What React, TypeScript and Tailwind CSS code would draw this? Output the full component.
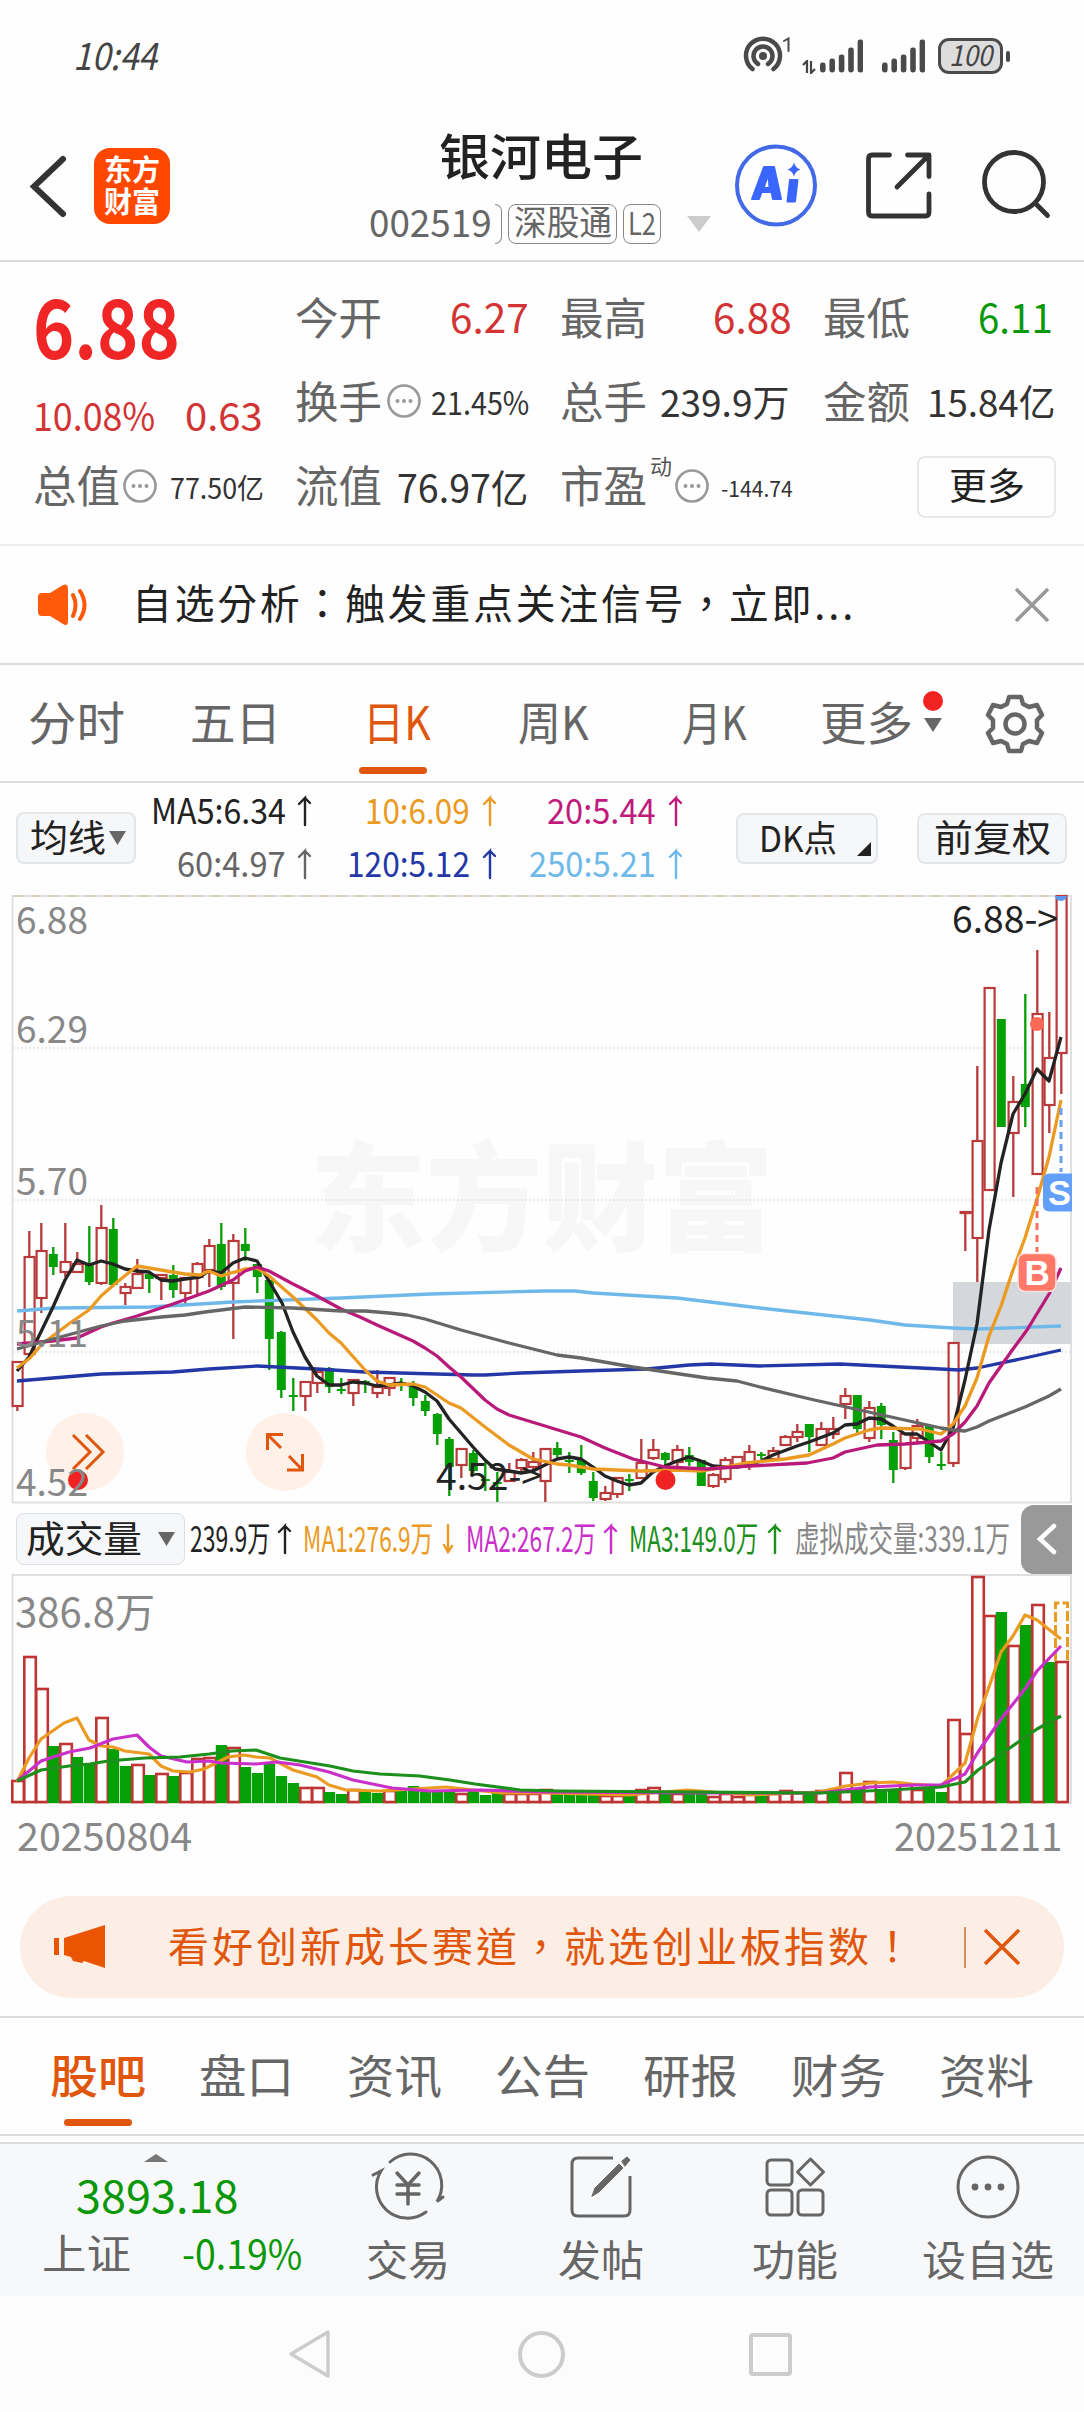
import React, { useLayoutEffect, useRef, useState } from 'react'
import clsx from 'clsx'

type Candle = [kind: 'r' | 'g', high: number, top: number, bottom: number, low: number]
type Volume = [kind: 'r' | 'g', top: number]

const UP = '#b93a3a'
const DOWN = '#05a005'

const candles: Candle[] = [
  ['r', 1362, 1362, 1406, 1411], ['r', 1231, 1257, 1354, 1355], ['r', 1223, 1251, 1298, 1313], ['g', 1247, 1254, 1267, 1275],
  ['r', 1223, 1262, 1272, 1277], ['r', 1252, 1264, 1272, 1272], ['g', 1226, 1264, 1282, 1285], ['r', 1205, 1228, 1283, 1285],
  ['g', 1218, 1229, 1285, 1285], ['r', 1283, 1287, 1293, 1305], ['r', 1259, 1274, 1288, 1288], ['g', 1272, 1274, 1279, 1293],
  ['r', 1274, 1275, 1278, 1300], ['g', 1265, 1275, 1290, 1298], ['r', 1277, 1278, 1293, 1304], ['r', 1262, 1264, 1277, 1294],
  ['r', 1239, 1246, 1270, 1287], ['g', 1223, 1244, 1287, 1290], ['r', 1234, 1241, 1283, 1339], ['g', 1228, 1244, 1251, 1261],
  ['g', 1264, 1264, 1277, 1293], ['g', 1280, 1280, 1339, 1370], ['g', 1331, 1332, 1390, 1398], ['g', 1378, 1395, 1397, 1411],
  ['r', 1382, 1382, 1396, 1411], ['r', 1368, 1372, 1383, 1393], ['g', 1367, 1368, 1387, 1393], ['g', 1378, 1389, 1391, 1394],
  ['r', 1379, 1380, 1393, 1406], ['g', 1380, 1381, 1383, 1393], ['r', 1370, 1387, 1393, 1398], ['r', 1377, 1378, 1388, 1396],
  ['g', 1378, 1382, 1384, 1391], ['g', 1381, 1387, 1398, 1406], ['g', 1395, 1401, 1411, 1416], ['g', 1413, 1414, 1434, 1445],
  ['g', 1437, 1439, 1467, 1496], ['r', 1449, 1449, 1465, 1478], ['g', 1450, 1453, 1471, 1475], ['g', 1462, 1479, 1480, 1491],
  ['g', 1472, 1482, 1483, 1502], ['r', 1463, 1472, 1481, 1482], ['r', 1458, 1460, 1468, 1472], ['r', 1452, 1462, 1467, 1471],
  ['r', 1449, 1449, 1481, 1502], ['g', 1442, 1448, 1455, 1457], ['g', 1452, 1460, 1461, 1473], ['g', 1445, 1460, 1473, 1475],
  ['g', 1472, 1481, 1498, 1501], ['r', 1486, 1493, 1499, 1501], ['r', 1477, 1478, 1494, 1498], ['g', 1474, 1479, 1481, 1491],
  ['r', 1439, 1463, 1478, 1479], ['r', 1439, 1450, 1458, 1460], ['g', 1452, 1453, 1460, 1465], ['r', 1445, 1450, 1462, 1466],
  ['g', 1447, 1455, 1462, 1466], ['g', 1460, 1460, 1486, 1486], ['r', 1473, 1475, 1486, 1488], ['r', 1457, 1460, 1479, 1483],
  ['r', 1457, 1457, 1466, 1467], ['r', 1445, 1452, 1464, 1470], ['g', 1452, 1454, 1456, 1459], ['r', 1447, 1451, 1459, 1459],
  ['r', 1435, 1437, 1445, 1445], ['r', 1424, 1432, 1437, 1442], ['g', 1424, 1424, 1437, 1452], ['r', 1422, 1429, 1445, 1445],
  ['r', 1417, 1429, 1434, 1439], ['r', 1388, 1396, 1404, 1419], ['g', 1395, 1395, 1429, 1435], ['r', 1401, 1408, 1438, 1442],
  ['g', 1403, 1406, 1425, 1439], ['g', 1432, 1440, 1470, 1483], ['r', 1434, 1434, 1468, 1470], ['r', 1419, 1426, 1438, 1442],
  ['g', 1426, 1426, 1457, 1463], ['g', 1452, 1464, 1466, 1470], ['r', 1343, 1343, 1463, 1467], ['r', 1212, 1212, 1213, 1251],
  ['r', 1066, 1141, 1238, 1282], ['r', 988, 988, 1190, 1190], ['g', 1019, 1019, 1127, 1127], ['r', 1076, 1102, 1133, 1197],
  ['g', 994, 1084, 1107, 1127], ['r', 950, 1014, 1174, 1174], ['r', 1012, 1058, 1105, 1133], ['r', 896, 896, 1053, 1094],
]

const volumes: Volume[] = [
  ['r', 1780], ['r', 1656], ['r', 1688], ['g', 1746], ['r', 1743], ['g', 1757], ['g', 1764], ['r', 1717], ['g', 1749], ['g', 1766],
  ['r', 1764], ['g', 1775], ['r', 1773], ['g', 1776], ['r', 1772], ['r', 1758], ['r', 1757], ['g', 1745], ['r', 1747], ['g', 1767],
  ['g', 1773], ['g', 1764], ['g', 1776], ['g', 1783], ['r', 1787], ['r', 1787], ['g', 1792], ['g', 1794], ['r', 1789], ['g', 1792],
  ['g', 1793], ['r', 1790], ['g', 1791], ['g', 1786], ['g', 1791], ['g', 1791], ['g', 1790], ['r', 1793], ['g', 1791], ['g', 1795],
  ['g', 1793], ['r', 1793], ['r', 1793], ['r', 1793], ['r', 1789], ['g', 1792], ['g', 1792], ['g', 1792], ['g', 1792], ['r', 1795],
  ['r', 1795], ['g', 1793], ['r', 1789], ['r', 1787], ['g', 1792], ['r', 1793], ['g', 1792], ['g', 1793], ['r', 1796], ['r', 1793],
  ['r', 1796], ['r', 1793], ['g', 1796], ['r', 1793], ['r', 1790], ['r', 1792], ['g', 1793], ['r', 1790], ['g', 1789], ['r', 1772],
  ['g', 1789], ['r', 1781], ['g', 1789], ['g', 1789], ['r', 1784], ['r', 1789], ['g', 1789], ['g', 1792], ['r', 1719], ['r', 1733],
  ['r', 1576], ['r', 1615], ['g', 1612], ['r', 1645], ['g', 1625], ['r', 1604], ['g', 1662], ['r', 1661],
]

const priceLines = [
  { color: '#6fb9ea', points: '17,1311 55,1308 150,1307 233,1302 341,1298 430,1294 545,1291 575,1291 593,1293 677,1298 710,1302 760,1308 870,1320 905,1325 953,1328 977,1329 1061,1326' },
  { color: '#2337a6', points: '17,1381 101,1374 173,1372 209,1369 257,1366 317,1369 365,1372 400,1373 473,1375 485,1375 521,1373 581,1371 647,1369 689,1365 711,1364 760,1366 840,1364 941,1369 959,1370 977,1368 1025,1358 1061,1350' },
  { color: '#232323', points: '17,1371 29,1357 37,1340 53,1307 65,1280 77,1260 89,1265 101,1261 113,1264 125,1269 137,1271 149,1272 161,1280 172,1281 185,1279 200,1277 209,1271 221,1273 233,1263 245,1258 257,1261 269,1281 282,1303 293,1332 305,1357 317,1376 329,1385 341,1385 353,1382 365,1383 377,1386 389,1385 401,1383 413,1386 425,1392 437,1401 449,1419 461,1433 473,1447 485,1460 495,1469 509,1471 521,1473 533,1471 545,1465 557,1459 569,1457 581,1459 593,1467 605,1476 617,1481 629,1485 641,1483 653,1472 665,1466 677,1461 689,1457 701,1461 713,1466 725,1467 737,1467 749,1465 761,1461 773,1455 797,1446 809,1442 833,1433 845,1425 857,1424 869,1418 881,1419 893,1426 905,1434 917,1434 929,1442 941,1450 953,1428 965,1380 977,1324 989,1230 1001,1163 1013,1114 1025,1094 1037,1069 1049,1081 1061,1037' },
  { color: '#eb9a22', points: '17,1368 30,1358 42,1344 70,1323 89,1310 101,1296 116,1283 137,1266 161,1270 185,1274 200,1275 209,1271 221,1276 245,1269 257,1268 269,1276 293,1297 317,1320 329,1333 341,1343 365,1370 377,1381 389,1385 413,1384 425,1387 449,1403 461,1408 485,1427 509,1445 533,1459 557,1464 569,1465 593,1469 617,1470 641,1471 677,1470 701,1471 725,1467 745,1463 785,1459 809,1455 833,1444 845,1438 869,1430 881,1428 920,1429 941,1434 953,1424 965,1406 977,1378 989,1336 1001,1306 1013,1270 1025,1238 1037,1199 1049,1157 1061,1100' },
  { color: '#b91a79', points: '17,1344 52,1341 77,1338 101,1327 113,1323 137,1316 173,1304 209,1291 233,1280 245,1271 257,1267 269,1271 293,1284 317,1296 341,1309 360,1317 377,1325 413,1341 425,1348 437,1356 449,1367 461,1377 485,1400 497,1409 509,1415 545,1426 581,1437 605,1448 633,1459 665,1467 707,1469 749,1466 807,1463 833,1458 845,1452 877,1445 905,1444 941,1441 953,1434 965,1422 977,1406 989,1383 1013,1349 1027,1330 1049,1294 1061,1268' },
  { color: '#666', points: '17,1349 53,1339 101,1326 125,1321 161,1317 185,1315 205,1312 245,1307 293,1308 341,1311 365,1311 389,1313 407,1315 425,1319 461,1330 509,1343 557,1355 581,1358 633,1367 673,1373 707,1378 737,1381 760,1387 810,1399 873,1413 941,1428 953,1430 965,1431 977,1427 989,1421 1025,1407 1049,1396 1061,1389' },
]

const volumeLines = [
  { color: '#eb9a22', points: '17,1782 29,1758 41,1739 64,1723 77,1718 89,1740 101,1746 113,1747 125,1751 149,1754 161,1766 173,1771 190,1772 204,1769 228,1757 244,1755 256,1757 270,1758 293,1770 317,1777 329,1785 346,1790 380,1791 446,1787 501,1793 542,1793 629,1795 687,1790 750,1795 819,1792 846,1786 870,1783 893,1782 912,1784 941,1786 965,1763 978,1717 989,1687 1001,1652 1013,1636 1025,1615 1037,1620 1061,1639' },
  { color: '#c930c9', points: '17,1781 41,1761 69,1752 90,1748 113,1739 137,1735 149,1747 161,1756 187,1762 209,1761 221,1763 256,1764 277,1762 300,1765 329,1772 353,1780 392,1788 430,1791 480,1790 542,1792 700,1793 819,1793 870,1787 912,1785 941,1785 965,1774 978,1752 1001,1719 1025,1689 1037,1671 1061,1646' },
  { color: '#1c8f1c', points: '17,1781 41,1770 69,1766 90,1764 108,1761 145,1758 180,1757 209,1754 232,1751 256,1750 280,1758 330,1766 353,1771 380,1774 420,1776 450,1780 475,1784 520,1790 560,1791 819,1793 890,1790 941,1787 965,1782 978,1770 1001,1754 1037,1729 1061,1716' },
]

const candleX = (i: number) => 17.3 + i * 12

// Squeezes or stretches a single line of text to the width of its box.
function Fit({ children, className }: { children: string; className?: string }) {
  const box = useRef<HTMLDivElement>(null)
  const line = useRef<HTMLSpanElement>(null)
  const [scale, setScale] = useState(1)

  useLayoutEffect(() => {
    if (!box.current || !line.current) return
    setScale(box.current.clientWidth / line.current.offsetWidth)
  }, [children])

  return (
    <div ref={box} className={clsx('shrink-0 whitespace-nowrap leading-none', className)}>
      <span ref={line} className="inline-block origin-left" style={{ transform: `scaleX(${scale})` }}>{children}</span>
    </div>
  )
}

function Dots({ className }: { className?: string }) {
  return (
    <svg className={clsx('shrink-0', className)} width="34" height="34" viewBox="0 0 34 34">
      <circle cx="17" cy="17" r="15.5" fill="none" stroke="#999" strokeWidth="2.6" />
      {[10.5, 17, 23.5].map(x => <circle key={x} cx={x} cy="17" r="2" fill="#999" />)}
    </svg>
  )
}

function Caret({ className, color = '#666', up }: { className?: string; color?: string; up?: boolean }) {
  return (
    <svg className={clsx('shrink-0', className)} viewBox="0 0 18 14" preserveAspectRatio="none">
      <path d={up ? 'M0 14H18L9 0Z' : 'M0 0H18L9 14Z'} fill={color} />
    </svg>
  )
}

function Signal({ className }: { className?: string }) {
  return (
    <svg className={className} width="43" height="34" viewBox="0 0 43 34">
      {[10, 14, 18, 25, 33].map((h, i) => (
        <rect key={h} x={i * 9.4} y={33.5 - h} width="5.6" height={h} rx="2.4" fill="#4a4a4a" />
      ))}
    </svg>
  )
}

function StatusBar() {
  return (
    <div className="h-[112px] flex items-center pl-[73px] text-[#444]">
      <Fit className="w-[84px] text-[38px] italic -mt-1">10:44</Fit>
      <svg className="ml-[585px]" width="50" height="42" viewBox="742 36 50 42" fill="none" stroke="#4a4a4a" strokeWidth="4.5" strokeLinecap="round">
        <circle cx="763" cy="57" r="4" fill="#4a4a4a" stroke="none" />
        <path d="M758 65a9.500 9.500 0 1 1 10 0M752.500 70a17 17 0 1 1 21 0" />
        <path d="M784 42l4.500-2.500V52" strokeWidth="2" />
      </svg>
      <svg className="ml-[10px] mt-[22px]" width="14" height="14" viewBox="0 0 14 14" fill="none" stroke="#444" strokeWidth="2.2">
        <path d="M1 5L5 1V13M9 1V13L13 9" />
      </svg>
      <Signal className="ml-[4px]" />
      <Signal className="ml-[19px]" />
      <div className="ml-[13px] w-[65px] h-[36px] rounded-[11px] border-[3px] border-[#4a4a4a] bg-[#ddd] flex items-center justify-center">
        <Fit className="w-[43px] text-[29px] italic -mt-1.5">100</Fit>
      </div>
      <div className="ml-[3px] w-[4px] h-[11px] rounded-full bg-[#4a4a4a]" />
    </div>
  )
}

function Header() {
  return (
    <header className="h-[150px] flex items-start border-b-2 border-[#ddd]">
      <svg className="mt-[42px] ml-[28px]" width="42" height="66" viewBox="28 154 42 66" fill="none" stroke="#333" strokeWidth="6" strokeLinecap="round">
        <path d="M63 159L34 186.500L63 214" />
      </svg>
      <div className="mt-[36px] ml-[24px] w-[76px] h-[76px] rounded-[16px] bg-[#ff4700] text-white font-bold flex flex-col items-center justify-center gap-[3px] pb-1">
        <Fit className="w-[56px] text-[29px]">东方</Fit>
        <Fit className="w-[56px] text-[29px]">财富</Fit>
      </div>
      <div className="ml-[199px] w-[294px]">
        <Fit className="mt-[17px] ml-[70px] w-[204px] text-[49px] text-[#222] font-medium">银河电子</Fit>
        <div className="mt-[25px] flex items-center h-[42px] text-[#666]">
          <Fit className="w-[123px] text-[38px] -mt-1.5">002519</Fit>
          <div className="ml-[3px] w-[7px] h-[40px] rounded-r-[7px] border-y border-r border-[#888]" />
          <div className="ml-[6px] w-[109px] h-[40px] rounded-[8px] border border-[#888] flex items-center justify-center">
            <Fit className="w-[98px] text-[34px] -mt-1.5">深股通</Fit>
          </div>
          <div className="ml-[6px] w-[38px] h-[40px] rounded-[8px] border border-[#888] flex items-center justify-center">
            <Fit className="w-[28px] text-[31px] -mt-1.5">L2</Fit>
          </div>
        </div>
      </div>
      <Caret className="mt-[104px] ml-[24px] w-[24px] h-[16px]" color="#ccc" />
      <svg className="mt-[32px] ml-[23px]" width="84" height="84" viewBox="734 144 84 84">
        <circle cx="776" cy="185.500" r="39" fill="none" stroke="#4169e8" strokeWidth="4" />
        <g fill="#3a66ff" stroke="#3a66ff" strokeWidth="2" strokeLinejoin="round">
          <path fillRule="evenodd" d="M764 167H774L781 199H773L771.500 192H761.500L759 199H752ZM768.500 174L763.500 188H769.500Z" />
          <path d="M790 180H797.500L795 201.500H787.500Z" />
          <path strokeWidth="0" d="M794 162.500Q795.500 168 800.500 169.500Q795.500 171 794 176.500Q792.500 171 787.500 169.500Q792.500 168 794 162.500Z" />
        </g>
      </svg>
      <svg className="mt-[38px] ml-[46px]" width="72" height="72" viewBox="864 150 72 72" fill="none" stroke="#333" strokeWidth="4.800" strokeLinecap="round" strokeLinejoin="round">
        <path d="M889.500 155H872Q868.500 155 868.500 159V212Q868.500 216 872 216H925.500Q929 216 929 212V194M907.500 155H929V176.500M928 156L897 187" />
      </svg>
      <svg className="mt-[36px] ml-[44px]" width="72" height="72" viewBox="980 148 72 72" fill="none" stroke="#333" strokeWidth="4.800" strokeLinecap="round">
        <circle cx="1014" cy="182" r="29.500" />
        <path d="M1036 204L1047.500 215.500" />
      </svg>
    </header>
  )
}

function Quote() {
  const label = 'w-[87px] -mt-1.5 text-[44px] text-[#666]'
  return (
    <section className="h-[284px] pt-[15px] pl-[33px] grid grid-cols-[262px_265px_263px_1fr] grid-rows-[84px_84px_84px] items-center border-b-2 border-[#eee] text-[#333]">
      <div className="row-span-2 h-full text-[#d23434]">
        <Fit className="mt-[6px] w-[147px] text-[82px] font-bold text-[#f02626]">6.88</Fit>
        <div className="mt-[30px] flex">
          <Fit className="w-[122px] text-[39px]">10.08%</Fit>
          <Fit className="ml-[30px] w-[78px] text-[39px]">0.63</Fit>
        </div>
      </div>
      <div className="flex items-center">
        <Fit className={label}>今开</Fit>
        <Fit className="ml-[68px] w-[79px] text-[40px] text-[#d23434] -mt-1.5">6.27</Fit>
      </div>
      <div className="flex items-center">
        <Fit className={label}>最高</Fit>
        <Fit className="ml-[66px] w-[79px] text-[40px] text-[#d23434] -mt-1.5">6.88</Fit>
      </div>
      <div className="flex items-center">
        <Fit className={label}>最低</Fit>
        <Fit className="ml-[68px] w-[75px] text-[40px] text-[#0a980a] -mt-1.5">6.11</Fit>
      </div>

      <div className="flex items-center">
        <Fit className={label}>换手</Fit>
        <Dots className="ml-[5px] -mt-1" />
        <Fit className="ml-[10px] w-[98px] text-[32px] -mt-1">21.45%</Fit>
      </div>
      <div className="flex items-center">
        <Fit className={label}>总手</Fit>
        <Fit className="ml-[13px] w-[129px] text-[37px] -mt-1">239.9万</Fit>
      </div>
      <div className="flex items-center">
        <Fit className={label}>金额</Fit>
        <Fit className="ml-[17px] w-[128px] text-[37px] -mt-1">15.84亿</Fit>
      </div>

      <div className="flex items-center">
        <Fit className={label}>总值</Fit>
        <Dots className="ml-[3px] -mt-0.5" />
        <Fit className="ml-[13px] w-[94px] text-[28px]">77.50亿</Fit>
      </div>
      <div className="flex items-center">
        <Fit className={label}>流值</Fit>
        <Fit className="ml-[15px] w-[131px] text-[39px] -mt-0.5">76.97亿</Fit>
      </div>
      <div className="flex items-center">
        <Fit className={label}>市盈</Fit>
        <Fit className="ml-[3px] mb-[44px] w-[22px] text-[21px] text-[#555]">动</Fit>
        <Dots className="ml-[3px] -mt-0.5" />
        <Fit className="ml-[12px] w-[72px] text-[22px]">-144.74</Fit>
      </div>
      <div className="ml-[94px] w-[139px] h-[62px] rounded-[8px] border-2 border-[#e8e8e8] flex items-center justify-center text-[#222]">
        <Fit className="w-[76px] text-[37px] -mt-1.5">更多</Fit>
      </div>
    </section>
  )
}

function Notice() {
  return (
    <section className="h-[119px] flex items-center pl-[38px] border-b-2 border-[#ddd]">
      <svg width="52" height="44" viewBox="38 582 52 44" fill="#ff5a0a">
        <path d="M42 592H50L63 584Q68 582 68 588V620Q68 626 63 623L50 615H42Q38 615 38 611V596Q38 592 42 592Z" />
        <path d="M73 594Q78 604 73 615M80 590Q89 604 80 618" fill="none" stroke="#ff5a0a" strokeWidth="4" strokeLinecap="round" />
      </svg>
      <Fit className="ml-[42px] w-[724px] text-[41px] text-[#222] tracking-[3px] -mt-1.5 font-['Noto_Sans_CJK_TC',sans-serif]">自选分析：触发重点关注信号，立即...</Fit>
      <svg className="ml-[157px]" width="38" height="38" viewBox="0 0 38 38" stroke="#999" strokeWidth="3.500">
        <path d="M3 3L35 35M35 3L3 35" />
      </svg>
    </section>
  )
}

function PeriodTabs() {
  return (
    <nav className="h-[118px] flex items-start border-b-2 border-[#ddd] text-[46px] text-[#666]">
      <Fit className="mt-[32px] ml-[28px] w-[97px]">分时</Fit>
      <Fit className="mt-[32px] ml-[65px] w-[91px]">五日</Fit>
      <div className="ml-[78px] w-[68px] h-full text-[#e0560c]">
        <Fit className="mt-[32px] ml-[4px] w-[68px]">日K</Fit>
        <div className="mt-[24px] h-[7px] rounded-full bg-[#e0560c]" />
      </div>
      <Fit className="mt-[32px] ml-[91px] w-[71px]">周K</Fit>
      <Fit className="mt-[32px] ml-[93px] w-[65px]">月K</Fit>
      <Fit className="mt-[32px] ml-[73px] w-[93px]">更多</Fit>
      <div className="mt-[26px] ml-[9px] flex flex-col items-center w-[22px]">
        <div className="w-[20px] h-[20px] rounded-full bg-[#f02222]" />
        <Caret className="mt-[7px] w-[18px] h-[14px]" />
      </div>
      <svg className="mt-[29px] ml-[41px]" width="60" height="60" viewBox="-30 -30 60 60" fill="none" stroke="#666" strokeWidth="4.500" strokeLinejoin="round">
        <path d="M-6 -27H6L8 -20L14 -17L22 -19L27 -9L22 -4V4L27 9L22 19L14 17L8 20L6 27H-6L-8 20L-14 17L-22 19L-27 9L-22 4V-4L-27 -9L-22 -19L-14 -17L-8 -20Z" />
        <circle r="9.500" />
      </svg>
    </nav>
  )
}

function UpArrow({ down, className }: { down?: boolean; className?: string }) {
  return (
    <svg className={clsx('shrink-0', className)} width="16" height="32" viewBox="0 0 16 32" fill="none" stroke="currentColor" strokeWidth="2.400" strokeLinecap="round">
      <path d={down ? 'M8 2V29M4 22L8 29L12 23' : 'M8 30V3L2 9M8 3L13 8'} />
    </svg>
  )
}

function Averages() {
  const cell = 'flex items-center justify-end'
  const button = 'shrink-0 rounded-[8px] border-2 border-[#e4e7ea] bg-[#f6f7f9] flex items-center text-[#222]'
  return (
    <div className="h-[110px] flex items-center pl-[16px]">
      <div className={clsx(button, 'w-[120px] h-[52px] pl-[12px]')}>
        <Fit className="w-[76px] text-[37px] -mt-1">均线</Fit>
        <Caret className="ml-[3px] w-[17px] h-[14px]" />
      </div>
      <div className="-mt-[6px] grid grid-cols-[177px_185px_186px] grid-rows-[53px_53px] text-[35px]">
        <div className={clsx(cell, 'text-[#222]')}><Fit className="w-[135px]">MA5:6.34</Fit><UpArrow className="ml-[11px] mt-1" /></div>
        <div className={clsx(cell, 'text-[#eb9a22]')}><Fit className="w-[105px]">10:6.09</Fit><UpArrow className="ml-[12px] mt-1" /></div>
        <div className={clsx(cell, 'text-[#c01a7d]')}><Fit className="w-[109px]">20:5.44</Fit><UpArrow className="ml-[12px] mt-1" /></div>
        <div className={clsx(cell, 'text-[#666]')}><Fit className="w-[109px]">60:4.97</Fit><UpArrow className="ml-[11px] mt-1" /></div>
        <div className={clsx(cell, 'text-[#2337a6]')}><Fit className="w-[123px]">120:5.12</Fit><UpArrow className="ml-[12px] mt-1" /></div>
        <div className={clsx(cell, 'text-[#6fb9ea]')}><Fit className="w-[127px]">250:5.21</Fit><UpArrow className="ml-[12px] mt-1" /></div>
      </div>
      <div className={clsx(button, 'ml-[52px] w-[142px] h-[51px] pl-[21px]')}>
        <Fit className="w-[78px] text-[36px] -mt-1">DK点</Fit>
        <svg className="ml-[20px] mt-[22px]" width="14" height="14" viewBox="0 0 14 14"><path d="M14 0V14H0Z" fill="#222" /></svg>
      </div>
      <div className={clsx(button, 'ml-[39px] w-[150px] h-[51px] justify-center')}>
        <Fit className="w-[117px] text-[37px] -mt-1">前复权</Fit>
      </div>
    </div>
  )
}

function PriceChart() {
  const axis: [string, number][] = [['6.88', 934], ['6.29', 1043], ['5.70', 1195], ['5.11', 1347], ['4.52', 1496]]
  return (
    <svg className="block overflow-visible" width="1084" height="611" viewBox="0 893 1084 611">
      <text x="310" y="1242" fontSize="118" fontWeight="900" fill="#f7f7f7" textLength="464" lengthAdjust="spacingAndGlyphs">东方财富</text>
      <g stroke="#e9e9e9" strokeWidth="2" strokeDasharray="2 2">
        <path d="M13 1048H1071M13 1200H1071M13 1352H1071" />
      </g>
      <rect x="12.500" y="896" width="1058.500" height="606.500" fill="none" stroke="#e0e0e0" strokeWidth="2" />
      <path d="M13 896H1060" stroke="#d8c29a" strokeWidth="1" strokeDasharray="10 8" />
      <rect x="953" y="1282" width="118" height="62" fill="#d4d7dc" />
      <circle cx="85" cy="1452" r="39" fill="#fff0e8" />
      <circle cx="285" cy="1452" r="39" fill="#fff0e8" />
      {candles.map(([kind, high, top, bottom, low], i) => {
        const x = candleX(i)
        const color = kind === 'r' ? UP : DOWN
        return (
          <g key={i}>
            <path d={`M${x} ${high}V${top}M${x} ${bottom}V${low}`} stroke={color} strokeWidth="2.300" />
            {kind === 'g'
              ? <rect x={x - 4.5} y={top} width="9" height={Math.max(bottom - top, 2)} fill={color} />
              : <rect x={x - 4.7} y={top} width="10" height={Math.max(bottom - top, 1)} fill="#fff" stroke={color} strokeWidth="2.200" />}
          </g>
        )
      })}
      {priceLines.map(l => (
        <polyline key={l.color} points={l.points} fill="none" stroke={l.color} strokeWidth="3.300" strokeLinejoin="round" />
      ))}
      <g fill="none" stroke="#e0560c" strokeWidth="3">
        <path d="M73 1435L90 1452L73 1469M86 1435L103 1452L86 1469" />
        <path d="M283 1434.500H267.500V1450M268 1435L281 1448M287 1470H302.500V1454M302 1469.500L289 1456" />
      </g>
      <circle cx="78" cy="1480" r="10" fill="#f02222" />
      <circle cx="665.500" cy="1480" r="10" fill="#f02222" />
      <circle cx="1037" cy="1000" r="7" fill="#ff6a58" transform="translate(0 24)" />
      <path d="M1055 896A6 5 0 0 0 1067 896Z" fill="#5b97ee" />
      <path d="M1037 1187V1252" stroke="#f4705f" strokeWidth="3" strokeDasharray="7 5" />
      <path d="M1061 1108V1172" stroke="#6ba0ee" strokeWidth="3" strokeDasharray="7 5" />
      <rect x="1018" y="1253.500" width="38" height="38" rx="7" fill="#ff7868" stroke="#ffe4e0" strokeWidth="1.500" />
      <path d="M1072 1173.500H1050Q1043 1173.500 1043 1180V1205Q1043 1211.500 1050 1211.500H1072Z" fill="#629ff8" />
      <g fontFamily="Liberation Sans" fontWeight="700" fill="#fff" fontSize="35">
        <text x="1024.500" y="1285">B</text>
        <text x="1048" y="1205" textLength="23" lengthAdjust="spacingAndGlyphs">S</text>
      </g>
      <g fontSize="38" fill="#888">
        {axis.map(([label, y]) => (
          <text key={label} x="16" y={y} textLength="72" lengthAdjust="spacingAndGlyphs">{label}</text>
        ))}
      </g>
      <g fontSize="38" fill="#222">
        <text x="952" y="933" textLength="106" lengthAdjust="spacingAndGlyphs">6.88-&gt;</text>
        <text x="436" y="1490" textLength="106" lengthAdjust="spacingAndGlyphs">4.52-&gt;</text>
      </g>
    </svg>
  )
}

function VolumeHeader() {
  const text = 'text-[35px] -mt-1.5'
  return (
    <div className="h-[70px] flex items-center pl-[16px]">
      <div className="w-[169px] h-[52px] shrink-0 rounded-[8px] border border-[#dcdfe4] bg-[#f6f7f9] flex items-center pl-[9px] text-[#222]">
        <Fit className="w-[116px] text-[37px] -mt-1">成交量</Fit>
        <Caret className="ml-[16px] w-[17px] h-[14px]" />
      </div>
      <Fit className={clsx(text, 'ml-[5px] w-[80px] text-[#222]')}>239.9万</Fit>
      <UpArrow className="ml-[7px] text-[#222]" />
      <Fit className={clsx(text, 'ml-[10px] w-[130px] text-[#eb9a22]')}>MA1:276.9万</Fit>
      <UpArrow down className="ml-[7px] text-[#eb9a22]" />
      <Fit className={clsx(text, 'ml-[10px] w-[130px] text-[#c930c9]')}>MA2:267.2万</Fit>
      <UpArrow className="ml-[7px] text-[#c930c9]" />
      <Fit className={clsx(text, 'ml-[10px] w-[129px] text-[#1c8f1c]')}>MA3:149.0万</Fit>
      <UpArrow className="ml-[9px] text-[#1c8f1c]" />
      <Fit className={clsx(text, 'ml-[12px] w-[215px] text-[#888]')}>虚拟成交量:339.1万</Fit>
      <div className="ml-[11px] w-[51px] h-[69px] shrink-0 rounded-l-[13px] bg-[#999] flex items-center justify-center">
        <svg width="22" height="34" viewBox="0 0 22 34" fill="none" stroke="#fff" strokeWidth="4.500" strokeLinecap="round">
          <path d="M18 4L4 17L18 30" />
        </svg>
      </div>
    </div>
  )
}

function VolumeChart() {
  return (
    <svg className="block" width="1084" height="230" viewBox="0 1574 1084 230">
      <rect x="12.500" y="1575" width="1058.500" height="228" fill="none" stroke="#e0e0e0" strokeWidth="2" />
      {volumes.map(([kind, top], i) => {
        const x = candleX(i)
        return kind === 'g'
          ? <rect key={i} x={x - 5.5} y={top} width="11.300" height={1803 - top} fill={DOWN} />
          : <rect key={i} x={x - 5} y={top + 1} width="11.500" height={1801 - top} fill="#fff" stroke="#c03434" strokeWidth="2.600" />
      })}
      <path d="M1055.500 1661V1603H1067.500V1661" fill="none" stroke="#eb9a22" strokeWidth="3" strokeDasharray="10 3" />
      {volumeLines.map(l => (
        <polyline key={l.color} points={l.points} fill="none" stroke={l.color} strokeWidth="3.200" strokeLinejoin="round" />
      ))}
      <text x="15" y="1627" fontSize="40" fill="#888" textLength="140" lengthAdjust="spacingAndGlyphs">386.8万</text>
    </svg>
  )
}

function Banner() {
  return (
    <div className="mx-[20px] h-[102px] rounded-full bg-[#fceee5] flex items-center pl-[32px]">
      <svg width="54" height="46" viewBox="52 1924 54 46" fill="#ea5504">
        <path d="M54 1938H59V1955H54ZM64 1938L105 1925V1968L84 1961L82 1963L73 1961L71 1957L64 1955Z" />
      </svg>
      <Fit className="ml-[62px] w-[748px] text-[41px] tracking-[3px] text-[#e0560c] -mt-1.5 font-['Noto_Sans_CJK_TC',sans-serif]">看好创新成长赛道，就选创业板指数！</Fit>
      <div className="ml-[48px] w-[2px] h-[41px] bg-[#d98a5e]" />
      <svg className="ml-[17px]" width="38" height="38" viewBox="0 0 38 38" stroke="#e0560c" strokeWidth="3.500">
        <path d="M2 2L36 36M36 2L2 36" />
      </svg>
    </div>
  )
}

const sections = ['盘口', '资讯', '公告', '研报', '财务', '资料']

function SectionTabs() {
  return (
    <nav className="h-[118px] pl-[50px] flex border-b-2 border-[#ddd] text-[46px] text-[#666]">
      <div className="w-[96px] text-[#e0560c]">
        <Fit className="mt-[32px] w-[96px] font-medium">股吧</Fit>
        <div className="mt-[23px] mx-auto w-[68px] h-[7px] rounded-full bg-[#e0560c]" />
      </div>
      {sections.map(s => (
        <Fit key={s} className="mt-[32px] ml-[53px] w-[95px]">{s}</Fit>
      ))}
    </nav>
  )
}

function ActionBar() {
  const item = 'flex flex-col items-center'
  const icon = { width: 76, height: 76, fill: 'none', stroke: '#666', strokeWidth: 3, strokeLinecap: 'round' as const }
  return (
    <div className="h-[154px] border-t-2 border-[#ddd] bg-[#f7f8fa] flex text-[42px] text-[#666]">
      <div className="w-[312px]">
        <Caret up className="mt-[10px] ml-[144px] w-[24px] h-[8px]" color="#777" />
        <Fit className="mt-[9px] ml-[76px] w-[162px] text-[45px] text-[#0a980a]">3893.18</Fit>
        <div className="mt-[15px] flex items-center">
          <Fit className="ml-[42px] w-[89px] text-[41px]">上证</Fit>
          <Fit className="ml-[51px] w-[120px] text-[40px] text-[#0a980a]">-0.19%</Fit>
        </div>
      </div>
      <div className={clsx(item, 'w-[192px] pt-[5px]')}>
        <svg {...icon} viewBox="-38 -38 76 76">
          <path d="M-18 -25A31 31 0 0 1 29 14.500L35 10M18 25A31 31 0 0 1 -27 -16L-35 -12" />
          <path d="M-11 -14L0 -2L11 -14M0 -2V17M-11 -2H11M-11 7H11" strokeWidth="3.500" />
        </svg>
        <Fit className="mt-[12px] w-[84px]">交易</Fit>
      </div>
      <div className={clsx(item, 'w-[194px] pt-[5px]')}>
        <svg {...icon} viewBox="-38 -38 76 76">
          <path d="M12 -29H-23Q-29 -29 -29 -23V23Q-29 29 -23 29H23Q29 29 29 23V-11" strokeLinecap="butt" />
          <path d="M-9 9L-6 1L18 -23L22 -19L-2 5ZM21 -26L26 -30L29 -27L24 -21Z" fill="#666" strokeWidth="1" />
        </svg>
        <Fit className="mt-[12px] w-[86px]">发帖</Fit>
      </div>
      <div className={clsx(item, 'w-[194px] pt-[5px]')}>
        <svg {...icon} viewBox="-38 -38 76 76">
          <rect x="-28" y="-27" width="25" height="25" rx="4" />
          <rect x="-28" y="3" width="25" height="25" rx="4" />
          <rect x="3" y="3" width="25" height="25" rx="4" />
          <path d="M15.500 -28L28.500 -15L15.500 -2L2.500 -15Z" strokeLinejoin="round" />
        </svg>
        <Fit className="mt-[12px] w-[86px]">功能</Fit>
      </div>
      <div className={clsx(item, 'w-[191px] pt-[5px]')}>
        <svg {...icon} viewBox="-38 -38 76 76">
          <circle r="30" />
          {[-13, 0, 13].map(x => <circle key={x} cx={x} r="3.400" fill="#666" stroke="none" />)}
        </svg>
        <Fit className="mt-[12px] w-[132px]">设自选</Fit>
      </div>
    </div>
  )
}

function SystemNav() {
  return (
    <div className="h-[116px] bg-[#fcfcfc] flex items-center pl-[287px]">
      <svg width="46" height="50" viewBox="0 0 46 50" fill="none" stroke="#ccc" strokeWidth="3.500" strokeLinejoin="round">
        <path d="M41 3V47L4 25Z" />
      </svg>
      <div className="ml-[185px] w-[47px] h-[47px] rounded-full border-[4px] border-[#ccc]" />
      <div className="ml-[184px] w-[43px] h-[43px] rounded-[4px] border-[4px] border-[#ccc]" />
    </div>
  )
}

export default function App() {
  return (
    <div className="w-[1084px] h-[2412px] overflow-hidden bg-[#fefefe] font-['Noto_Sans_CJK_SC',sans-serif]">
      <StatusBar />
      <Header />
      <Quote />
      <Notice />
      <PeriodTabs />
      <Averages />
      <PriceChart />
      <VolumeHeader />
      <VolumeChart />
      <div className="h-[92px] pt-[11px] pl-[17px] pr-[22px] flex justify-between text-[39px] text-[#888]">
        <Fit className="w-[175px]">20250804</Fit>
        <Fit className="w-[168px]">20251211</Fit>
      </div>
      <Banner />
      <div className="h-[20px] border-b-2 border-[#ddd]" />
      <SectionTabs />
      <div className="h-[6px]" />
      <ActionBar />
      <SystemNav />
    </div>
  )
}
